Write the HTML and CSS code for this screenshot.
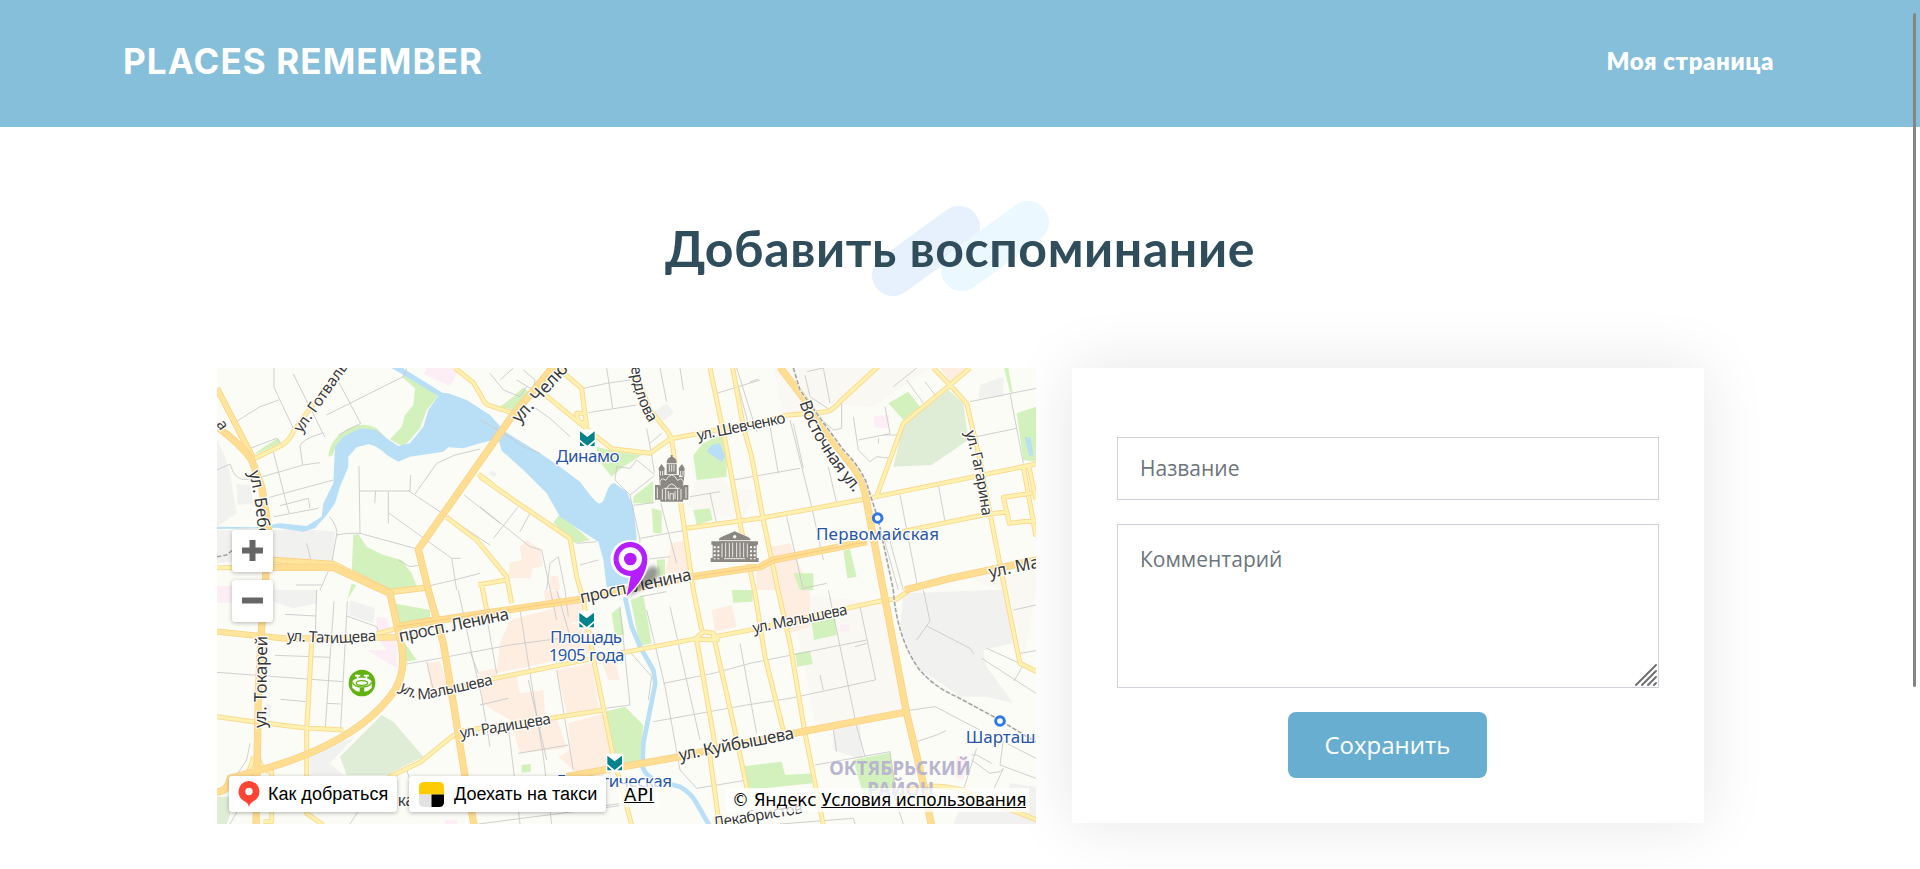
FILE: index.html
```html
<!DOCTYPE html>
<html lang="ru">
<head>
<meta charset="utf-8">
<title>Places Remember</title>
<link rel="stylesheet" href="styles.css">
</head>
<body>
<header class="header">
  <a class="logo">PLACES REMEMBER</a>
  <nav><a class="nav-link">Моя страница</a></nav>
</header>
<main class="main">
  <div class="section-title">
    <svg class="title-shape" viewBox="872 201 177 95" width="177" height="95">
      <path d="M893 275 959 227" class="pill pill-a"/>
      <path d="M962 270 1028 222" class="pill pill-b"/>
    </svg>
    <h2 class="title">Добавить воспоминание</h2>
  </div>
  <div class="content">
    <div class="map">
      <svg class="map-canvas" viewBox="21 24 2457 1368" preserveAspectRatio="none">
        <defs>
          <path id="yellow" d="M400 20 300 145 250 215Q240 240 215 256L133 296M735 24 790 68 815 110Q825 135 840 137L912 160M1050 30 1115 85 1130 200M1000 100 1110 190 1205 266 1320 280 1380 237 1650 185 1730 166 1850 155Q1870 150 1890 125L2004 20M1132 187Q1100 195 1100 160L1126 160M1272 24 1320 150 1365 205Q1385 225 1388 260L1412 430 1450 690 1475 810M1460 840 1516 1160 1500 1190 1528 1395M1510 825 1570 1090 1613 1295M1500 24 1545 240 1590 490 1635 700 1665 890 1722 1120M1568 24 1600 200 1625 290 1660 480 1705 695 1740 850 1785 1120 1840 1395M1430 505 1650 475 1950 420 2000 410 2478 312M2000 408 2080 190 2220 75 2280 24M2170 24 2220 75 2270 130 2310 300 2340 460 2385 690 2430 910 2480 935M2440 320 2478 530M2456 316 2478 420M2390 455 2380 412 2465 400M2390 455 2398 490 2478 480M810 350 910 420 1080 535 1100 650 1120 720 1155 920 1210 1190 1265 1395M710 472 800 540 890 650 905 730M805 342 850 376M805 674 890 660M815 674 830 750M620 1008 855 955 1150 895 1458 836 1480 815 1510 820 1522 840 1460 838M1515 830 1630 808 1910 745 2025 720 2060 718 2095 692M535 1252 630 1207 725 1130 760 1112 1022 1075 1180 1050M305 850 290 1110 290 1360 340 1395M21 1070 130 1085 280 1103 400 1110M2070 1310Q2120 1260 2250 1288L2480 1380M21 623 360 620M500 822 560 805M2025 540 2090 512 2320 465 2390 455M145 1190Q150 1230 185 1235V1385H160M130 1190Q125 1230 90 1265"/>
          <path id="thin-orange" d="M21 85 128 292M21 815 230 836 560 832M190 600 370 612 540 696 655 682M560 800 690 775"/>
          <path id="orange" d="M21 200Q95 255 125 300L155 380 175 500 165 690 155 800 145 1000 138 1400M1030 20 905 170 625 568 655 690 700 850 735 1060 765 1250 792 1395M180 622H370L540 700 575 860Q590 950 540 1010C470 1100 350 1170 180 1222L60 1255Q55 1295 15 1297M560 800 810 762 1110 718 1450 650 1650 620 1690 600 1970 545M1710 22 1785 120 1850 220 1920 310Q1955 350 1965 400L2020 690 2090 1060 2140 1270 2165 1400M2085 690 2220 655 2480 600M1070 1250 1410 1190 1500 1170 1750 1120 2090 1056"/>
          <g id="metro"><path class="metro-bg" d="M-26-28H26V28H-26Z"/><path class="metro" d="M-22-22 0-5 22-22V3L0 21-22 3Z"/><path class="metro" d="M-22 9-8 22H-22ZM22 9 8 22H22Z"/></g>
          <path id="p1" d="M274 220Q345 120 425 5"/>
          <path id="p2" d="M116 336Q142 430 146 570"/>
          <path id="p3" d="M928 192 1110 -8"/>
          <path id="p4" d="M1263 20Q1272 120 1322 195"/>
          <path id="p5" d="M1464 241 1735 187"/>
          <path id="p6" d="M1768 128C1800 225 1860 315 1938 406"/>
          <path id="p7" d="M2266 216Q2303 350 2318 485"/>
          <path id="p8" d="M1114 730 1452 658"/>
          <path id="p9" d="M2340 654 2560 608"/>
          <path id="p10" d="M230 842 370 850 507 842"/>
          <path id="p11" d="M570 846 907 776"/>
          <path id="p12" d="M168 1104 172 820"/>
          <path id="p13" d="M566 988Q605 1022 650 1017L867 970"/>
          <path id="p14" d="M752 1135 1030 1090"/>
          <path id="p15" d="M1631 820 1920 762"/>
          <path id="p16" d="M1410 1202 1762 1134"/>
          <path id="p17" d="M1512 1404 1787 1358"/>
        </defs>
        <path class="land" d="M0 0H2500V1400H0Z"/>
        <path class="beige" d="M1690 24H2160L1990 140 1850 130 1720 170ZM1740 700 2020 730 2080 1060 1820 1110ZM1480 300 1560 380 1640 390 1600 480 1430 440ZM2230 640 2478 600V690L2440 900 2400 700Z"/>
        <path class="grey" d="M21 240 45 290 60 340 80 460 21 500ZM80 372 120 375 130 430 82 435ZM21 510H180L320 510 375 515 370 602 180 592 21 610ZM180 690H320V730L250 745 180 722ZM420 720 495 745 490 790 415 765ZM1330 158 1370 130 1392 158 1360 182ZM2080 700 2350 690H2385L2410 850 2320 870 2330 920 2410 1030 2330 1010 2250 1010 2120 920 2070 800ZM2310 75 2380 50V110L2305 115ZM1870 1110 1950 1095 1960 1200 1870 1170ZM2400 1270 2478 1280V1392H2230L2270 1300 2380 1340ZM300 1185 435 1130 360 1210 400 1245H300ZM170 1030 185 1035 180 1070 165 1068ZM840 330 860 340 855 350 838 345Z"/>
        <path class="pink" d="M650 24H750L720 78 640 42ZM21 678H65V728H21ZM500 770 530 775 560 860V925L470 870 530 870 500 830ZM1992 168 2038 165 2035 205 1992 202ZM1888 795 1918 792V812L1892 815ZM2240 1190H2275L2260 1260 2235 1250ZM705 1380H740V1392H705Z"/>
        <path class="peach" d="M930 560 950 540 992 568 998 620 968 624 962 655 898 655V608L935 600ZM1385 550 1430 540 1440 635 1365 640ZM1020 645 1045 650 1050 690H1020ZM900 780 1090 730 1110 720 1120 780 1080 790 1130 800 1140 880 860 940 870 850ZM1000 690 1045 695 1070 740 1010 745ZM1040 930 1145 910 1165 1045 1070 1060ZM815 960 920 945 930 1000 1000 990 1005 1060 1040 1075 1060 1130 1070 1165 930 1180 900 1080 815 1030ZM1075 1090 1180 1060 1210 1220 1100 1240 1045 1190 1080 1170ZM1170 890 1210 880 1230 960 1195 960ZM652 908 690 903 712 980 662 990ZM805 935 860 925 870 990 812 990ZM1505 750 1565 735 1580 800 1515 815ZM1680 560 1740 550 1800 690 1800 800 1740 820 1710 700ZM1640 690V620L1690 610 1700 690ZM2190 24H2270L2220 65Z"/>
        <path class="green" d="M590 38 625 62 685 108 650 150 630 205 580 262 540 238 575 200 585 165 610 135 615 85 575 50ZM355 290Q360 240 400 215 450 180 500 205L540 245 500 212 450 207 400 232 375 265 368 286ZM130 286 160 262 205 234 212 250ZM430 525 445 522 470 560 520 585 575 600 605 640 625 690H500L425 640ZM425 672 440 675 430 690 412 718ZM870 140 910 110 940 82 955 95 915 152ZM1160 260 1220 275 1295 285 1240 320 1205 350 1165 300ZM1030 488 1050 462 1140 540 1095 550ZM1270 410 1330 362V430H1270ZM1325 445 1355 452V520H1330ZM1450 285 1480 250 1550 215V350L1460 360ZM1450 450 1500 445 1508 480 1460 495ZM1340 600 1365 598V650L1345 655ZM2035 130 2095 95 2130 140 2080 180ZM2382 24H2395L2408 100 2400 95ZM2420 160 2478 140V305L2440 300ZM1900 572 1920 568 1940 650 1912 655ZM550 730 660 750V780L570 790ZM585 850 620 900 585 905ZM590 840 640 790 600 850ZM1205 760 1230 740 1243 825 1215 828ZM1262 720 1300 705 1325 850 1290 858ZM1185 1055 1245 1040 1300 1095 1290 1210 1220 1215ZM935 1215 962 1212V1235L935 1238ZM1565 690H1628V725L1570 728ZM1750 640H1810V690H1770ZM1805 790 1875 770 1880 825 1812 840ZM1755 880 1800 872 1808 912 1762 920ZM1590 1220 1715 1205 1725 1245 1808 1240V1270L1610 1290ZM1930 1200 2040 1178 2060 1290 1960 1305Z"/>
        <path class="park" d="M2080 195 2215 90 2260 130 2275 240 2165 315 2050 320ZM390 1190 515 1065 550 1085 640 1190 530 1245H410ZM21 1310H80L50 1392H21Z"/>
        <path class="water" d="M545 24H578L697 98 715 100 770 120 840 165 885 215 990 280 1050 320 1110 365Q1150 420 1165 430 1180 434 1190 395 1205 360 1220 374L1250 395 1270 440 1280 530 1255 670 1190 682 1180 600 1165 545 1110 510 1050 470 1010 400 940 330 875 272 865 236 810 250 760 265 715 262 700 275 600 290 565 305 530 285Q500 255 475 253L440 262 415 290V320L390 380 375 430 350 465 315 505 280 515 200 503 21 507V500L130 502 210 490 290 498 335 470 340 430 370 370 375 260 400 230 450 205 500 210 530 235 565 258 600 250 640 200 655 150 685 108ZM1490 275 1505 255 1530 250 1545 290 1535 305ZM2444 230 2462 235 2470 285 2458 288Z"/>
        <path class="river" d="M1245 712 1265 800 1290 860 1330 930 1336 970 1300 1150 1297 1220Q1310 1255 1350 1265L1410 1280Q1445 1300 1460 1330L1500 1400"/>
        <path class="minor" d="M192 24V82L250 205M80 184 150 140 207 120M250 42 345 232M350 165 580 50 590 25M375 45 452 190 385 225M120 265 200 235 212 250M190 275 237 460M340 218Q270 240 270 260L278 315M158 350 280 315 330 308M21 330 60 312Q75 365 110 358L158 350M178 412 370 360M210 437 295 415 300 445M192 470 325 445M447 318 450 520H410L380 525 365 610 330 690M358 470Q385 500 380 530M450 520 625 568M447 393H600L602 345M497 393 494 430M535 393V490M535 458 725 595H752M615 402 680 310 735 285 810 267M595 392 840 555M762 405 870 490M725 595 740 690M655 678 725 662 810 640M565 600 600 620 630 615M290 550 302 598M258 675H335M21 937 398 965M225 763 318 768M195 886 360 892M372 724 360 895 346 1102M412 724 392 1105M320 690 315 850M212 1018 290 1025M410 768 500 800 510 830M350 1030 392 1032M590 912 660 900 900 855 1090 830M650 905 670 990M745 690 785 880 815 1010 840 1160M780 875 805 940M810 1035 895 1015M830 770 860 940M930 750 960 940 1000 1190 1025 1392M955 960 1010 1200M1040 930 1090 1230M1040 690 1080 830M925 1180 1075 1155M895 1100 930 1392M1090 1350 1310 1320M805 1392 1245 1335M870 60 910 24M840 40 880 90 930 110 950 80M920 60 970 90 975 60 940 30M970 140 1020 175 1080 230M810 180 890 225 940 260 990 280M1120 85 1190 70 1260 60M1135 158 1280 135M1190 24 1208 145M1350 24 1370 125M1410 24 1420 90M1310 205 1325 285 1335 350 1360 460 1400 610M1320 250 1355 220M1280 300 1335 345 1260 405 1215 360 1220 320 1260 325ZM1260 405 1290 540 1285 600M1290 535 1430 510M1290 600 1380 590M1270 436 1350 425M810 440 960 560 995 570 1040 780M930 515 960 460M850 535 925 440M1010 690 1020 610 1045 590 1065 690 1075 770M1100 550 1160 545M1110 615 1165 600M1440 410 1530 395M1500 400 1520 490M1520 100 1650 60M1570 24 1620 210M1580 24 1640 215M1570 360 1770 325M1680 200 1705 340M1740 180 1805 440M1750 190 1780 325M1855 320 1880 430M1730 470 1780 690M1805 440 1840 600M1780 685 1850 670M1790 35 1840 24 1860 130M1785 45 1800 110 1860 150M1895 125V205L1870 210 1825 170M1930 170 1945 270 1980 305 2000 290 2040 295M1945 240 2020 225 2065 225M2020 225 2040 220 2025 140M2090 60 2140 130M2050 80 2120 24M2145 65 2175 105M2280 125 2478 85M2300 230 2420 205M2400 100 2440 310M2070 405 2125 690M2185 375 2205 485M2020 530 2065 690M2035 525 2080 690M2005 250 2006 235M1620 65 1645 58M1290 710 1370 695M1310 750 1365 980 1410 1230 1460 1285 1600 1262M1360 970 1510 940 1620 910 1970 840M1330 1085 1610 1035 1740 1015 1995 960M1380 740 1470 1140M1590 850 1640 1120M1950 740 1997 960M1855 690 1940 1100 1965 1190M1970 850 1935 860M1830 945 1840 990M1870 1108 1880 1175M2090 1052 2175 1040 2310 1110M2120 1145 2180 1125 2208 1112M1815 1215 2040 1175 2055 1280M2120 840 2160 783 2140 690M2150 798 2280 865 2292 882M2330 865 2440 915 2412 963M2315 895 2478 1000M2410 750 2478 735M2430 880 2478 872M2380 1140 2370 1215 2478 1255M2285 1185H2300L2345 1210M2285 1200 2340 1240 2370 1235 2380 1225 2350 1290M2300 1165 2260 1290M2390 1150 2478 1195M1710 1392 1930 1375 1935 1392M2050 1300 2080 1392M1255 870 1325 950 1315 1020M1230 740 1260 1035 1185 1045M120 1150 110 1200 80 1245M95 1330 60 1392M590 1230 600 1260M460 1330 420 1392"/>
        <use href="#yellow" class="yellow-edge"/>
        <use href="#yellow" class="yellow"/>
        <use href="#thin-orange" class="thin-edge"/>
        <use href="#thin-orange" class="thin-orange"/>
        <use href="#orange" class="orange-edge"/>
        <use href="#orange" class="orange"/>
        <path class="divider" d="M560 800 810 762 1110 718M1450 650 1650 620 1690 600 1970 545"/>
        <path class="rail-bg" d="M1750 24 1770 90 1820 160 1900 270Q1950 320 1970 370L2005 480 2050 690Q2060 830 2125 925 2170 980 2240 1010L2360 1075 2480 1147"/>
        <path class="rail" d="M1750 24 1770 90 1820 160 1900 270Q1950 320 1970 370L2005 480 2050 690Q2060 830 2125 925 2170 980 2240 1010L2360 1075 2480 1147M21 590 50 585 80 560"/>

        <g transform="translate(1385 357)" class="sight">
          <path class="sight-bg" d="M-52-20-42-44-15-50 0-74 15-50 42-44 52-20V72H-52Z"/>
          <path d="M-3-72H3V-66Q15-62 15-48V-14H-15V-48Q-15-62-3-66ZM-31-45-22-34Q-19-29-22-26V-6H-38V-26Q-41-29-38-34ZM31-45 22-34Q19-29 22-26V-6H38V-26Q41-29 38-34ZM-37-4Q-32-12-18-12H18Q32-12 37-4V18H50V62H34V68H-34V62H-50V18H-37Z"/>
          <path class="sight-line" d="M-43 25V58M43 25V58M-16-46H16M-7-43V-22M0-43V-22M7-43V-22M-34-24V-10M-27-24V-10M27-24V-10M34-24V-10M-35 20V6Q-28-6-18 4 0-28 18 4 28-6 35 6V20M-18 64V32Q0-2 18 32V64M-24 28H24M-5 64V44H5V64M-28 62V30M28 62V30M-10 36V60M10 36V60"/>
        </g>
        <g transform="translate(1574 562)" class="sight">
          <path class="sight-bg" d="M-74-26-30-34 0-52 30-34 74-26V50H-74Z"/>
          <path d="M-70-18H-47V-26L-40-31 0-48 40-31 47-26V-18H70V-8H66V32H72V44H-72V32H-66V-8H-70Z"/>
          <circle class="sight-bg" cy="-32" r="5"/>
          <path class="sight-line" d="M-48-20H48M-38-12V30M-27-14V30M-16-14V30M-6-14V30M6-14V30M16-14V30M27-14V30M38-12V30M-32 34H32"/>
          <path class="sight-dots" d="M-60-3V36M-49-3V36M49-3V36M60-3V36"/>
        </g>
        <g transform="translate(456 969)">
          <circle r="40" class="stadium"/>
          <ellipse cy="-2" rx="29" ry="14" class="stadium-fill"/>
          <path class="stadium-fill" d="M-29-2H29V15Q20 25 7 26V14H-7V26Q-20 25-29 15Z"/>
          <ellipse cy="0" rx="17" ry="7" class="stadium-line"/>
          <path class="stadium-line" d="M-29-2Q-22 12 0 12T29-2"/>
          <path class="stadium-lamp" d="M-21-22H-5M-13-22V-12M5-22H21M13-22V-12"/>
        </g>
        <use href="#metro" x="1132" y="236"/><use href="#metro" x="1130" y="780"/><use href="#metro" x="1214" y="1209"/>
        <circle class="station" cx="2003" cy="474" r="13"/><circle class="station" cx="2370" cy="1083" r="13"/>

        <g class="street">
          <text><textPath href="#p1">ул. Готвальд</textPath></text>
          <text class="big"><textPath href="#p2">ул. Бебе</textPath></text>
          <text class="large"><textPath href="#p3">ул. Челю</textPath></text>
          <text><textPath href="#p4" textLength="180">ердлова</textPath></text>
          <text><textPath href="#p5" textLength="270">ул. Шевченко</textPath></text>
          <text class="big"><textPath href="#p6" textLength="318">Восточная ул.</textPath></text>
          <text><textPath href="#p7" textLength="258">ул. Гагарина</textPath></text>
          <text class="big"><textPath href="#p8" textLength="340">просп. Ленина</textPath></text>
          <text class="big"><textPath href="#p9">ул. Ма</textPath></text>
          <text><textPath href="#p10" textLength="270">ул. Татищева</textPath></text>
          <text class="big"><textPath href="#p11" textLength="336">просп. Ленина</textPath></text>
          <text class="big"><textPath href="#p12" textLength="276">ул. Токарей</textPath></text>
          <text><textPath href="#p13" textLength="296">ул. Малышева</textPath></text>
          <text><textPath href="#p14" textLength="276">ул. Радищева</textPath></text>
          <text><textPath href="#p15" textLength="289">ул. Малышева</textPath></text>
          <text class="big"><textPath href="#p16" textLength="351">ул. Куйбышева</textPath></text>
          <text><textPath href="#p17" textLength="272">Декабристов</textPath></text>
          <text x="563" y="1337">ка</text>
          <text transform="translate(18 193) rotate(55)">а</text>
        </g>
        <g class="place">
          <text x="1038" y="307" textLength="191">Динамо</text>
          <text x="1818" y="540" textLength="369">Первомайская</text>
          <text x="1020" y="849" textLength="216">Площадь</text>
          <text x="1016" y="902" textLength="227">1905 года</text>
          <text x="1040" y="1280" textLength="346">Геологическая</text>
          <text x="2267" y="1148">Шарташ</text>
        </g>
        <g class="district">
          <text x="1858" y="1246" textLength="424">ОКТЯБРЬСКИЙ</text>
          <text x="1972" y="1308" textLength="200">РАЙОН</text>
        </g>
        <path class="pin-shadow" d="M1252 712 1290 650Q1330 600 1345 630 1350 660 1310 675Z"/>
        <path class="pin-edge" d="M1261 540A57 57 0 0 1 1318 597C1318 638 1287 680 1249 715L1256 654A57 57 0 0 1 1261 540Z"/>
        <path class="pin" d="M1261 546A51 51 0 0 1 1312 597C1312 638 1282 680 1250 709L1262 648A51 51 0 0 1 1261 546Z"/>
        <circle cx="1261" cy="597" r="35" class="pin-hole"/><circle cx="1261" cy="597" r="19" class="pin"/>
      </svg>
      <div class="zoom">
        <button class="zoom-btn" aria-label="Приблизить"><svg width="21" height="21"><path d="M0 7.500H7.500V0H13.500V7.500H21V13.500H13.500V21H7.500V13.500H0Z" fill="#666"/></svg></button>
        <button class="zoom-btn" aria-label="Отдалить"><svg width="21" height="21"><path d="M0 7.500H21V13.500H0Z" fill="#666"/></svg></button>
      </div>
      <div class="map-footer">
        <a class="map-btn route"><svg width="22" height="26" viewBox="0 0 22 26"><path d="M11 0A10.500 10.500 0 0 1 21.500 10.500C21.500 15 19 18.500 15 20.500Q12 22 11 26 10 22 7 20.500C3 18.500.5 15 .5 10.500A10.500 10.500 0 0 1 11 0Z" fill="#ff4433"/><circle cx="11" cy="10.500" r="3.700" fill="#fff"/></svg><span>Как добраться</span></a>
        <a class="map-btn taxi"><svg width="25" height="25" viewBox="0 0 25 25"><path d="M0 12.500V5Q0 0 5 0H20Q25 0 25 5V12.500Z" fill="#fc0"/><path d="M0 12.500H12.500V25H5Q0 25 0 20Z" fill="#e2e2e2"/><path d="M12.500 12.500H25V20Q25 25 20 25H12.500Z" fill="#000"/></svg><span>Доехать на такси</span></a>
        <a class="api">API</a>
        <div class="copyright"><span>© Яндекс </span><a class="terms">Условия использования</a></div>
      </div>
    </div>
    <form class="form">
      <input class="field" type="text" placeholder="Название">
      <div class="comment">
        <textarea class="field area" placeholder="Комментарий"></textarea>
        <svg class="grip" width="22" height="22"><path d="M1 21 21 1M7 21 21 7M13 21 21 13M19 21 21 19"/></svg>
      </div>
      <button class="save" type="button">Сохранить</button>
    </form>
  </div>
</main>
<div class="scrollbar"></div>
</body>
</html>
```
FILE: styles.css
```css
* { box-sizing: border-box; }
body { margin: 0; height: 869px; overflow: hidden; background: #fff; font-family: "Open Sans", "Noto Sans", sans-serif; color: #2f4d5a; }
.header { height: 127px; background: #85bfda; display: flex; align-items: center; justify-content: space-between; padding: 0 146px 4px 123px; color: #fff; }
.logo { font: 700 35px/1 Inter, sans-serif; letter-spacing: 1.1px; white-space: nowrap; }
.nav-link { font: 800 24px/1 Lato, "Open Sans", sans-serif; letter-spacing: 0.6px; white-space: nowrap; }
.section-title { height: 241px; padding-top: 89px; text-align: center; position: relative; }
.title { margin: 0; font: 700 50px/64px Lato, "Open Sans", sans-serif; letter-spacing: 0.6px; white-space: nowrap; position: relative; }
.title-shape { position: absolute; left: 872px; top: 74px; overflow: visible; }
.pill { fill: none; stroke-width: 42; stroke-linecap: round; }
.pill-a { stroke: #e7f0fd; }
.pill-b { stroke: #ecf8ff; }
.content { display: flex; gap: 36px; padding-left: 217px; }
.map { position: relative; width: 819px; height: 456px; overflow: hidden; }
.map-canvas { display: block; width: 819px; height: 456px; }
.land { fill: #fbfcf6; }
.beige { fill: #faf8f2; }
.grey { fill: #f1f2ef; }
.pink { fill: #fdeef5; }
.peach { fill: #fdeee1; }
.green { fill: #d3f1bc; }
.park { fill: #dfedd6; }
.water { fill: #b9dff7; }
.river { fill: none; stroke: #b9dff7; stroke-width: 14; }
.minor { fill: none; stroke: #c8c8ca; stroke-width: 2.6; }
.rail-bg { fill: none; stroke: #f1f1ef; stroke-width: 7; }
.rail { fill: none; stroke: #a2a2a2; stroke-width: 4.5; stroke-dasharray: 13 6; }
.yellow-edge, .yellow, .thin-edge, .thin-orange, .orange-edge, .orange { fill: none; stroke-linejoin: round; }
.yellow-edge { stroke: #fbd991; stroke-width: 15; }
.yellow { stroke: #fff2b0; stroke-width: 9; }
.thin-edge { stroke: #f9d083; stroke-width: 19; }
.thin-orange { stroke: #ffe69c; stroke-width: 14; }
.orange-edge { stroke: #f9d28a; stroke-width: 22; }
.orange { stroke: #ffde92; stroke-width: 17; }
.divider { fill: none; stroke: #f9cc7d; stroke-width: 3; }
.sight { fill: #8b8884; }
.sight-bg { fill: #fbfcf6; }
.sight-line { fill: none; stroke: #fff; stroke-width: 2.5; }
.sight-dots { fill: none; stroke: #fff; stroke-width: 6; stroke-dasharray: 6 6; }
.stadium { fill: #62b212; }
.stadium-fill { fill: #fff; }
.stadium-line { fill: none; stroke: #62b212; stroke-width: 4; }
.stadium-lamp { fill: none; stroke: #fff; stroke-width: 5; }
.metro-bg { fill: #fff; }
.metro { fill: #00838b; }
.station { fill: #fff; stroke: #2f78e6; stroke-width: 9; }
.street, .place { font-family: "Noto Sans", sans-serif; paint-order: stroke; stroke: #fff; stroke-width: 7; stroke-linejoin: round; }
.street { font-size: 46px; fill: #393939; }
.big { font-size: 51px; }
.large { font-size: 53px; }
.place { font-size: 51px; fill: #2856a5; }
.district { font: 700 56px "Noto Sans", sans-serif; fill: #b9b5cf; }
.pin { fill: #b51eff; }
.pin-edge, .pin-hole { fill: #fff; }
.pin-shadow { fill: #000; opacity: .4; filter: blur(6px); }
.zoom { position: absolute; left: 15px; top: 162px; display: grid; gap: 8px; }
.zoom-btn { width: 41px; height: 42px; border: 0; padding: 0 0 2px; border-radius: 3px; background: #fff; box-shadow: 0 1px 4px rgba(0,0,0,.28); display: grid; place-items: center; }
.map-footer { position: absolute; left: 12px; right: 7px; top: 408px; height: 36px; display: flex; align-items: flex-start; color: #000; white-space: nowrap; }
.map-btn { height: 36px; display: flex; align-items: center; background: #fff; border-radius: 3px; box-shadow: 0 1px 4px rgba(0,0,0,.3); font: 18px/36px "Liberation Sans", sans-serif; }
.route { width: 168px; padding-left: 9px; gap: 8px; margin-right: 12px; }
.taxi { width: 197px; padding-left: 10px; gap: 10px; }
.api, .copyright { font: 17px/24px "DejaVu Sans", sans-serif; background: rgba(255,255,255,.75); }
.api { margin: 7px 0 0 13px; padding: 0 5px; text-decoration: underline; font-size: 18px; letter-spacing: 0.6px; }
.copyright { margin: 12px 0 0 auto; padding: 0 3px 0 6px; letter-spacing: -0.38px; }
.terms { text-decoration: underline; }
.form { width: 632px; height: 455px; padding: 69px 45px 0; background: #fff; box-shadow: 0 0 60px rgba(0,0,0,.1); display: flex; flex-direction: column; align-items: center; }
.field { display: block; width: 542px; height: 63px; border: 1px solid #ced0da; border-radius: 0; padding: 0 22px 1px; background: #fff; outline: 0; font: 21px/31px "Open Sans", sans-serif; color: #6c757d; }
.field::placeholder { color: #6c757d; opacity: 1; }
.comment { position: relative; margin: 24px 0; height: 164px; }
.area { height: 164px; padding-top: 19px; resize: none; }
.grip { position: absolute; right: 2px; bottom: 2px; stroke: #6e6e6e; stroke-width: 1.9; stroke-linecap: round; fill: none; }
.save { width: 199px; height: 66px; margin-right: 1px; border: 0; border-radius: 8px; background: #68aed1; color: #fff; font: 24px/1.5 "Open Sans", sans-serif; }
.scrollbar { position: absolute; left: 1913px; top: 13px; width: 3px; height: 674px; border-radius: 2px; background: #858585; }
```
